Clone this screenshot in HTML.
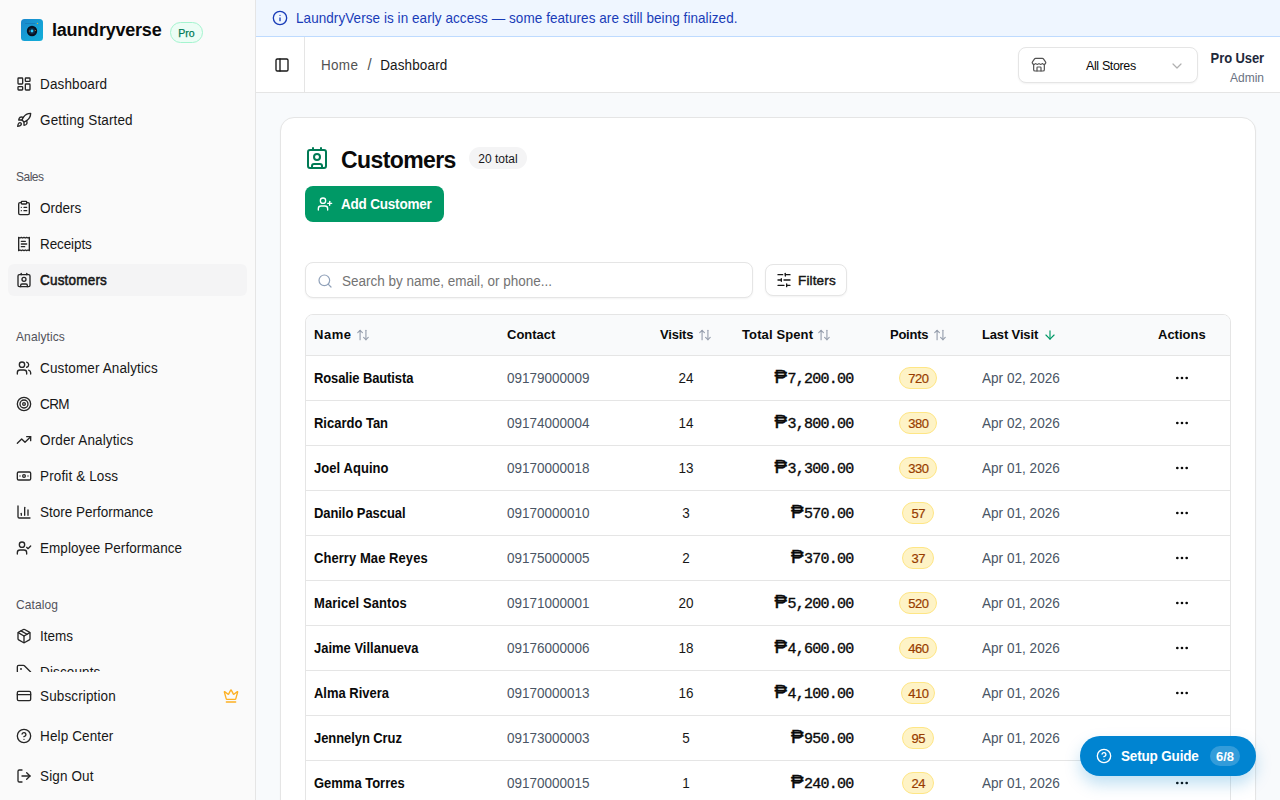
<!DOCTYPE html>
<html lang="en">
<head>
<meta charset="utf-8">
<title>Customers - LaundryVerse</title>
<style>
*{box-sizing:border-box;margin:0;padding:0}
html,body{width:1280px;height:800px;overflow:hidden}
body{font-family:"Liberation Sans",sans-serif;color:#0a0a0a;background:#f8fafc;position:relative;font-size:14px}
svg{display:block}
.abs{position:absolute}
.ico{position:absolute;width:16px;height:16px;fill:none;stroke:#262626;stroke-width:2;stroke-linecap:round;stroke-linejoin:round}
/* sidebar */
#sb{position:absolute;left:0;top:0;width:256px;height:800px;background:#fafafa;border-right:1px solid #e5e5e5;overflow:hidden}
.nav{position:absolute;left:8px;width:239px;height:32px;border-radius:6px}
.nav.act{background:#f4f4f5}
.nav .ico{left:8px;top:8px}
.nav span{position:absolute;left:32px;top:0;transform:translateY(.8px) scaleY(1.08);line-height:32px;font-size:13.5px;letter-spacing:.13px;color:#171717;white-space:nowrap}
.nav.act span{font-weight:normal;-webkit-text-stroke:.5px #171717;font-size:13.5px;letter-spacing:.2px}
.grp{position:absolute;left:16px;transform:translateY(-.2px) scaleY(1.03);transform-origin:0 50%;font-size:12px;letter-spacing:.1px;color:#52525b;line-height:16px}
/* banner */
#bn{position:absolute;left:256px;top:0;width:1024px;height:37px;background:#eff6ff;border-bottom:1px solid #bedbff}
#bn span{position:absolute;left:40px;top:1px;transform:translateY(-.3px) scaleY(1.06);line-height:36px;font-size:13.5px;letter-spacing:.065px;color:#193cb8;white-space:nowrap}
/* header */
#hd{position:absolute;left:256px;top:37px;width:1024px;height:56px;background:#fff;border-bottom:1px solid #e5e5e5}
/* card */
#card{position:absolute;left:280px;top:117px;width:976px;height:720px;background:#fff;border:1px solid #e5e5e5;border-radius:14px;box-shadow:0 1px 2px rgba(0,0,0,.04)}
/* table */
#tb{position:absolute;left:305px;top:314px;width:926px;height:520px;border:1px solid #e5e5e5;border-radius:8px 8px 0 0;overflow:hidden;background:#fff}
#th{position:absolute;left:0;top:0;width:100%;height:41px;background:#f9fafb;border-bottom:1px solid #e5e5e5}
.h{position:absolute;top:1px;transform:translateY(-.7px) scaleY(1.05);line-height:40px;font-weight:bold;font-size:13px;color:#0a0a0a;white-space:nowrap}
.srt{width:14px;height:14px;top:13px;stroke:#99a1af}
.row{position:absolute;left:0;width:100%;height:45px;border-bottom:1px solid #e5e5e5}
.row>*{position:absolute;top:0;line-height:44px;white-space:nowrap}
.nm{left:8px;transform:scaleX(.915);transform-origin:0 50%;font-weight:bold;font-size:14.2px;color:#0a0a0a}
.ct{left:201px;transform:scaleX(.93);transform-origin:0 50%;font-size:14.5px;color:#4a5565}
.vs{left:350px;transform:scaleX(.93);width:60px;text-align:center;font-size:14.5px;color:#171717}
.sp{right:376.500px;font-family:"Liberation Mono","DejaVu Sans Mono",monospace;font-weight:normal;-webkit-text-stroke:.35px #0a0a0a;font-size:15px;letter-spacing:-.75px;color:#0a0a0a;padding-top:2px}
.pt{left:562px;width:100px;text-align:center}
.pt i{display:inline-block;font-style:normal;height:22px;line-height:22px;padding:0 7.700px 0 8.300px;border-radius:11px;background:#fef3c6;border:1px solid #fee685;color:#973c00;font-size:13px;letter-spacing:-.55px;-webkit-text-stroke:.2px #973c00;vertical-align:middle;position:relative;top:-1px}
.lv{left:676px;transform:scaleX(.937);transform-origin:0 50%;font-size:14.5px;color:#4a5565}
.row>.ac{left:868px;top:14px;stroke:#0a0a0a;fill:#0a0a0a}
.ps{font-family:"Liberation Sans",sans-serif;font-size:18.7px;font-weight:normal;-webkit-text-stroke:.45px #0a0a0a;line-height:1;letter-spacing:0;margin-right:.5px}
</style>
</head>
<body>

<!-- SIDEBAR -->
<div id="sb">
  <div id="logo" class="abs" style="left:21px;top:19px;width:22px;height:22px;border-radius:3.5px;background:linear-gradient(135deg,#1a86cc,#15a2d6 60%,#12aed8);overflow:hidden">
    <svg width="22" height="22" viewBox="0 0 22 22"><rect x="4" y="3.900" width="10.500" height="1" rx=".5" fill="#1679b8" opacity=".8"/><circle cx="11" cy="12" r="5.200" fill="#08101f"/><circle cx="11" cy="12" r="3.200" fill="#0d2a45"/><circle cx="11" cy="12" r="1.400" fill="#2ccfff"/><circle cx="8.300" cy="12" r=".5" fill="#e0902a"/><circle cx="14.300" cy="11.500" r=".5" fill="#e0902a"/><circle cx="16.500" cy="4.400" r=".7" fill="#d8b23c"/></svg>
  </div>
  <div class="abs" style="left:52px;top:17px;line-height:26px;font-size:18px;font-weight:bold;color:#0a0a0a;letter-spacing:-.22px">laundryverse</div>
  <div class="abs" style="left:170px;top:22px;width:33px;height:21px;border-radius:11px;background:#ecfdf5;border:1px solid #a4f4cf;color:#007a55;font-size:10.5px;line-height:20px;-webkit-text-stroke:.25px #007a55;text-align:center">Pro</div>

  <div class="nav" style="top:68px"><svg class="ico" viewBox="0 0 24 24"><rect x="3" y="3" width="7" height="9" rx="1"/><rect x="14" y="3" width="7" height="5" rx="1"/><rect x="14" y="12" width="7" height="9" rx="1"/><rect x="3" y="16" width="7" height="5" rx="1"/></svg><span>Dashboard</span></div>
  <div class="nav" style="top:104px"><svg class="ico" viewBox="0 0 24 24"><path d="M4.5 16.5c-1.5 1.26-2 5-2 5s3.740-.5 5-2c.71-.84.7-2.130-.09-2.910a2.180 2.180 0 0 0-2.910-.09z"/><path d="m12 15-3-3a22 22 0 0 1 2-3.950A12.880 12.880 0 0 1 22 2c0 2.720-.78 7.500-6 11a22.350 22.350 0 0 1-4 2z"/><path d="M9 12H4s.55-3.030 2-4c1.620-1.080 5 0 5 0"/><path d="M12 15v5s3.030-.55 4-2c1.080-1.620 0-5 0-5"/></svg><span>Getting Started</span></div>

  <div class="grp" style="top:169px;letter-spacing:-.5px">Sales</div>
  <div class="nav" style="top:192px"><svg class="ico" viewBox="0 0 24 24"><rect x="8" y="2" width="8" height="4" rx="1" ry="1"/><path d="M16 4h2a2 2 0 0 1 2 2v14a2 2 0 0 1-2 2H6a2 2 0 0 1-2-2V6a2 2 0 0 1 2-2h2"/><path d="M12 11h4"/><path d="M12 16h4"/><path d="M8 11h.01"/><path d="M8 16h.01"/></svg><span style="letter-spacing:0">Orders</span></div>
  <div class="nav" style="top:228px"><svg class="ico" viewBox="0 0 24 24"><path d="M4 2v20l2-1 2 1 2-1 2 1 2-1 2 1 2-1 2 1V2l-2 1-2-1-2 1-2-1-2 1-2-1-2 1Z"/><path d="M14 8H8"/><path d="M16 12H8"/><path d="M13 16H8"/></svg><span style="letter-spacing:-.1px">Receipts</span></div>
  <div class="nav act" style="top:264px"><svg class="ico" viewBox="0 0 24 24"><path d="M16 2v2"/><path d="M7 22v-2a2 2 0 0 1 2-2h6a2 2 0 0 1 2 2v2"/><path d="M8 2v2"/><circle cx="12" cy="11" r="3"/><rect x="3" y="4" width="18" height="18" rx="2"/></svg><span>Customers</span></div>

  <div class="grp" style="top:329px">Analytics</div>
  <div class="nav" style="top:352px"><svg class="ico" viewBox="0 0 24 24"><path d="M16 21v-2a4 4 0 0 0-4-4H6a4 4 0 0 0-4 4v2"/><circle cx="9" cy="7" r="4"/><path d="M22 21v-2a4 4 0 0 0-3-3.870"/><path d="M16 3.130a4 4 0 0 1 0 7.750"/></svg><span>Customer Analytics</span></div>
  <div class="nav" style="top:388px"><svg class="ico" viewBox="0 0 24 24"><circle cx="12" cy="12" r="10"/><circle cx="12" cy="12" r="6"/><circle cx="12" cy="12" r="2"/></svg><span style="letter-spacing:-.6px">CRM</span></div>
  <div class="nav" style="top:424px"><svg class="ico" viewBox="0 0 24 24"><path d="M16 7h6v6"/><path d="m22 7-8.500 8.500-5-5L2 17"/></svg><span>Order Analytics</span></div>
  <div class="nav" style="top:460px"><svg class="ico" viewBox="0 0 24 24"><rect width="20" height="12" x="2" y="6" rx="2"/><circle cx="12" cy="12" r="2"/><path d="M6 12h.01M18 12h.01"/></svg><span>Profit &amp; Loss</span></div>
  <div class="nav" style="top:496px"><svg class="ico" viewBox="0 0 24 24"><path d="M3 3v16a2 2 0 0 0 2 2h16"/><path d="M18 17V9"/><path d="M13 17V5"/><path d="M8 17v-3"/></svg><span style="letter-spacing:0">Store Performance</span></div>
  <div class="nav" style="top:532px"><svg class="ico" viewBox="0 0 24 24"><path d="m16 11 2 2 4-4"/><path d="M16 21v-2a4 4 0 0 0-4-4H6a4 4 0 0 0-4 4v2"/><circle cx="9" cy="7" r="4"/></svg><span style="letter-spacing:.05px">Employee Performance</span></div>

  <div class="grp" style="top:597px">Catalog</div>
  <div class="nav" style="top:620px"><svg class="ico" viewBox="0 0 24 24"><path d="M11 21.730a2 2 0 0 0 2 0l7-4A2 2 0 0 0 21 16V8a2 2 0 0 0-1-1.730l-7-4a2 2 0 0 0-2 0l-7 4A2 2 0 0 0 3 8v8a2 2 0 0 0 1 1.730z"/><path d="M12 22V12"/><path d="M3.300 7 12 12l8.700-5"/><path d="m7.500 4.270 9 5.150"/></svg><span style="letter-spacing:0">Items</span></div>
  <div class="nav" style="top:656px"><svg class="ico" viewBox="0 0 24 24"><path d="M12.586 2.586A2 2 0 0 0 11.172 2H4a2 2 0 0 0-2 2v7.172a2 2 0 0 0 .586 1.414l8.704 8.704a2.426 2.426 0 0 0 3.420 0l6.580-6.580a2.426 2.426 0 0 0 0-3.420z"/><circle cx="7.500" cy="7.500" r=".5" fill="#262626"/></svg><span>Discounts</span></div>

  <!-- footer -->
  <div class="abs" style="left:0;top:672px;width:255px;height:128px;background:#fafafa">
    <div class="nav" style="top:8px"><svg class="ico" viewBox="0 0 24 24"><rect width="20" height="14" x="2" y="5" rx="2"/><path d="M2 10h20"/></svg><span>Subscription</span>
      <svg class="ico" style="left:215px;stroke:#fdb022" viewBox="0 0 24 24"><path d="M11.562 3.266a.5.5 0 0 1 .876 0L15.390 8.870a1 1 0 0 0 1.516.294L21.183 5.500a.5.500 0 0 1 .798.519l-2.834 10.246a1 1 0 0 1-.956.734H5.810a1 1 0 0 1-.957-.734L2.020 6.020a.5.500 0 0 1 .798-.519l4.276 3.664a1 1 0 0 0 1.516-.294z"/><path d="M5 21h14"/></svg></div>
    <div class="nav" style="top:48px"><svg class="ico" viewBox="0 0 24 24"><circle cx="12" cy="12" r="10"/><path d="M9.090 9a3 3 0 0 1 5.830 1c0 2-3 3-3 3"/><path d="M12 17h.01"/></svg><span>Help Center</span></div>
    <div class="nav" style="top:88px"><svg class="ico" viewBox="0 0 24 24"><path d="M9 21H5a2 2 0 0 1-2-2V5a2 2 0 0 1 2-2h4"/><path d="m16 17 5-5-5-5"/><path d="M21 12H9"/></svg><span>Sign Out</span></div>
  </div>
</div>

<!-- BANNER -->
<div id="bn">
  <svg class="ico" style="left:16px;top:10px;stroke:#193cb8" viewBox="0 0 24 24"><circle cx="12" cy="12" r="10"/><path d="M12 16v-4"/><path d="M12 8h.01"/></svg>
  <span>LaundryVerse is in early access — some features are still being finalized.</span>
</div>

<!-- HEADER -->
<div id="hd">
  <svg class="ico" style="left:18px;top:20px;stroke:#171717" viewBox="0 0 24 24"><rect width="18" height="18" x="3" y="3" rx="2"/><path d="M9 3v18"/></svg>
  <div class="abs" style="left:48px;top:0;width:1px;height:55px;background:#e5e5e5"></div>
  <div class="abs" style="left:65px;top:0;transform:translateY(-.5px) scaleY(1.07);line-height:55px;font-size:13.5px;color:#525252;white-space:nowrap"><span style="letter-spacing:.3px">Home</span><span style="margin:0 8.500px 0 9.300px;color:#525252;font-size:15px">/</span><span style="color:#171717;letter-spacing:.13px">Dashboard</span></div>
  <div class="abs" style="left:762px;top:10px;width:180px;height:36px;border:1px solid #e5e5e5;border-radius:8px;background:#fff;box-shadow:0 1px 2px rgba(0,0,0,.05)">
    <svg class="ico" style="left:12px;top:9px;stroke:#525252;stroke-width:1.8" viewBox="0 0 24 24"><path d="M15 21v-5a1 1 0 0 0-1-1h-4a1 1 0 0 0-1 1v5"/><path d="M17.774 10.310a1.120 1.120 0 0 0-1.549 0 2.500 2.500 0 0 1-3.451 0 1.120 1.120 0 0 0-1.548 0 2.500 2.500 0 0 1-3.452 0 1.120 1.120 0 0 0-1.549 0 2.500 2.500 0 0 1-3.770-3.248l2.889-4.184A2 2 0 0 1 7 2h10a2 2 0 0 1 1.653.873l2.895 4.192a2.500 2.500 0 0 1-3.774 3.244"/><path d="M4 10.950V19a2 2 0 0 0 2 2h12a2 2 0 0 0 2-2v-8.050"/></svg>
    <div class="abs" style="left:67px;top:1px;line-height:35px;font-size:12.5px;letter-spacing:-.37px;color:#0a0a0a;white-space:nowrap">All Stores</div>
    <svg class="ico" style="left:150px;top:10px;stroke:#b0b0b0;stroke-width:1.8" viewBox="0 0 24 24"><path d="m6 9 6 6 6-6"/></svg>
  </div>
  <div class="abs" style="right:16px;top:13px;transform:translateY(-.3px) scaleY(1.08);line-height:18px;font-size:13px;letter-spacing:-.1px;font-weight:bold;color:#1e293b;white-space:nowrap">Pro User</div>
  <div class="abs" style="right:16px;top:33px;line-height:16px;font-size:12px;color:#6a7282;white-space:nowrap">Admin</div>
</div>

<!-- CARD -->
<div id="card"></div>
<svg class="ico" style="left:305px;top:146px;width:24px;height:24px;stroke:#007a55" viewBox="0 0 24 24"><path d="M16 2v2"/><path d="M7 22v-2a2 2 0 0 1 2-2h6a2 2 0 0 1 2 2v2"/><path d="M8 2v2"/><circle cx="12" cy="11" r="3"/><rect x="3" y="4" width="18" height="18" rx="2"/></svg>
<div class="abs" id="ttl" style="left:341px;top:144px;line-height:32px;font-size:23px;letter-spacing:-.6px;font-weight:bold;color:#0a0a0a;white-space:nowrap">Customers</div>
<div class="abs" style="left:469px;top:147px;width:58px;height:22px;border-radius:11px;background:#f4f4f5;font-size:12px;line-height:24px;text-align:center;color:#18181b;white-space:nowrap">20 total</div>

<div class="abs" style="left:305px;top:186px;width:139px;height:36px;border-radius:8px;background:#009966">
  <svg class="ico" style="left:12px;top:10px;stroke:#fff" viewBox="0 0 24 24"><path d="M16 21v-2a4 4 0 0 0-4-4H6a4 4 0 0 0-4 4v2"/><circle cx="9" cy="7" r="4"/><path d="M19 8v6"/><path d="M22 11h-6"/></svg>
  <div class="abs" style="left:36px;top:0;transform:translateY(.4px) scaleY(1.1);line-height:36px;font-size:13.5px;letter-spacing:-.2px;font-weight:bold;color:#fff;white-space:nowrap">Add Customer</div>
</div>

<!-- search -->
<div class="abs" style="left:305px;top:262px;width:448px;height:36px;border:1px solid #e5e5e5;border-radius:8px;background:#fff;box-shadow:0 1px 2px rgba(0,0,0,.05)">
  <svg class="ico" style="left:11px;top:9.5px;stroke:#90a1b9;stroke-width:1.8" viewBox="0 0 24 24"><path d="m21 21-4.340-4.340"/><circle cx="11" cy="11" r="8"/></svg>
  <div class="abs" style="left:36px;top:0;transform:translateY(.6px) scaleY(1.05);line-height:36px;font-size:13.5px;color:#737373;white-space:nowrap">Search by name, email, or phone...</div>
</div>
<div class="abs" style="left:765px;top:264px;width:82px;height:32px;border:1px solid #e5e5e5;border-radius:8px;background:#fff;box-shadow:0 1px 2px rgba(0,0,0,.05)">
  <svg class="ico" style="left:10px;top:7px;stroke:#171717" viewBox="0 0 24 24"><path d="M21 4h-7"/><path d="M10 4H3"/><path d="M21 12h-9"/><path d="M8 12H3"/><path d="M21 20h-5"/><path d="M12 20H3"/><path d="M14 2v4"/><path d="M8 10v4"/><path d="M16 18v4"/></svg>
  <div class="abs" style="left:32px;top:0;line-height:32px;font-size:13.5px;letter-spacing:.15px;font-weight:normal;-webkit-text-stroke:.45px #171717;color:#171717;white-space:nowrap">Filters</div>
</div>

<!-- TABLE -->
<div id="tb">
  <div id="th">
    <div class="h" style="left:8px;letter-spacing:.55px">Name</div><svg class="ico srt" style="left:50px" viewBox="0 0 24 24"><path d="m21 16-4 4-4-4"/><path d="M17 20V4"/><path d="m3 8 4-4 4 4"/><path d="M7 4v16"/></svg>
    <div class="h" style="left:201px">Contact</div>
    <div class="h" style="left:354px;letter-spacing:-.2px">Visits</div><svg class="ico srt" style="left:392px" viewBox="0 0 24 24"><path d="m21 16-4 4-4-4"/><path d="M17 20V4"/><path d="m3 8 4-4 4 4"/><path d="M7 4v16"/></svg>
    <div class="h" style="left:436px;letter-spacing:.12px">Total Spent</div><svg class="ico srt" style="left:511px" viewBox="0 0 24 24"><path d="m21 16-4 4-4-4"/><path d="M17 20V4"/><path d="m3 8 4-4 4 4"/><path d="M7 4v16"/></svg>
    <div class="h" style="left:584px;letter-spacing:-.25px">Points</div><svg class="ico srt" style="left:627px" viewBox="0 0 24 24"><path d="m21 16-4 4-4-4"/><path d="M17 20V4"/><path d="m3 8 4-4 4 4"/><path d="M7 4v16"/></svg>
    <div class="h" style="left:676px;letter-spacing:-.15px">Last Visit</div><svg class="ico srt" style="left:737px;stroke:#009966" viewBox="0 0 24 24"><path d="M12 5v14"/><path d="m19 12-7 7-7-7"/></svg>
    <div class="h" style="left:852px">Actions</div>
  </div>
<!--ROWS-->
  <div class="row" style="top:41px"><div class="nm" style="letter-spacing:-.12px">Rosalie Bautista</div><div class="ct">09179000009</div><div class="vs">24</div><div class="sp"><span class="ps">₱</span>7,200.00</div><div class="pt"><i>720</i></div><div class="lv">Apr 02, 2026</div><svg class="ico ac" viewBox="0 0 24 24"><circle cx="12" cy="12" r="1"/><circle cx="19" cy="12" r="1"/><circle cx="5" cy="12" r="1"/></svg></div>
  <div class="row" style="top:86px"><div class="nm">Ricardo Tan</div><div class="ct">09174000004</div><div class="vs">14</div><div class="sp"><span class="ps">₱</span>3,800.00</div><div class="pt"><i>380</i></div><div class="lv">Apr 02, 2026</div><svg class="ico ac" viewBox="0 0 24 24"><circle cx="12" cy="12" r="1"/><circle cx="19" cy="12" r="1"/><circle cx="5" cy="12" r="1"/></svg></div>
  <div class="row" style="top:131px"><div class="nm" style="letter-spacing:.08px">Joel Aquino</div><div class="ct">09170000018</div><div class="vs">13</div><div class="sp"><span class="ps">₱</span>3,300.00</div><div class="pt"><i>330</i></div><div class="lv">Apr 01, 2026</div><svg class="ico ac" viewBox="0 0 24 24"><circle cx="12" cy="12" r="1"/><circle cx="19" cy="12" r="1"/><circle cx="5" cy="12" r="1"/></svg></div>
  <div class="row" style="top:176px"><div class="nm" style="letter-spacing:-.07px">Danilo Pascual</div><div class="ct">09170000010</div><div class="vs">3</div><div class="sp"><span class="ps">₱</span>570.00</div><div class="pt"><i>57</i></div><div class="lv">Apr 01, 2026</div><svg class="ico ac" viewBox="0 0 24 24"><circle cx="12" cy="12" r="1"/><circle cx="19" cy="12" r="1"/><circle cx="5" cy="12" r="1"/></svg></div>
  <div class="row" style="top:221px"><div class="nm" style="letter-spacing:.08px">Cherry Mae Reyes</div><div class="ct">09175000005</div><div class="vs">2</div><div class="sp"><span class="ps">₱</span>370.00</div><div class="pt"><i>37</i></div><div class="lv">Apr 01, 2026</div><svg class="ico ac" viewBox="0 0 24 24"><circle cx="12" cy="12" r="1"/><circle cx="19" cy="12" r="1"/><circle cx="5" cy="12" r="1"/></svg></div>
  <div class="row" style="top:266px"><div class="nm" style="letter-spacing:.085px">Maricel Santos</div><div class="ct">09171000001</div><div class="vs">20</div><div class="sp"><span class="ps">₱</span>5,200.00</div><div class="pt"><i>520</i></div><div class="lv">Apr 01, 2026</div><svg class="ico ac" viewBox="0 0 24 24"><circle cx="12" cy="12" r="1"/><circle cx="19" cy="12" r="1"/><circle cx="5" cy="12" r="1"/></svg></div>
  <div class="row" style="top:311px"><div class="nm">Jaime Villanueva</div><div class="ct">09176000006</div><div class="vs">18</div><div class="sp"><span class="ps">₱</span>4,600.00</div><div class="pt"><i>460</i></div><div class="lv">Apr 01, 2026</div><svg class="ico ac" viewBox="0 0 24 24"><circle cx="12" cy="12" r="1"/><circle cx="19" cy="12" r="1"/><circle cx="5" cy="12" r="1"/></svg></div>
  <div class="row" style="top:356px"><div class="nm">Alma Rivera</div><div class="ct">09170000013</div><div class="vs">16</div><div class="sp"><span class="ps">₱</span>4,100.00</div><div class="pt"><i style="padding:0 6px 0 6.600px">410</i></div><div class="lv">Apr 01, 2026</div><svg class="ico ac" viewBox="0 0 24 24"><circle cx="12" cy="12" r="1"/><circle cx="19" cy="12" r="1"/><circle cx="5" cy="12" r="1"/></svg></div>
  <div class="row" style="top:401px"><div class="nm" style="letter-spacing:-.07px">Jennelyn Cruz</div><div class="ct">09173000003</div><div class="vs">5</div><div class="sp"><span class="ps">₱</span>950.00</div><div class="pt"><i>95</i></div><div class="lv">Apr 01, 2026</div><svg class="ico ac" viewBox="0 0 24 24"><circle cx="12" cy="12" r="1"/><circle cx="19" cy="12" r="1"/><circle cx="5" cy="12" r="1"/></svg></div>
  <div class="row" style="top:446px"><div class="nm">Gemma Torres</div><div class="ct">09170000015</div><div class="vs">1</div><div class="sp"><span class="ps">₱</span>240.00</div><div class="pt"><i>24</i></div><div class="lv">Apr 01, 2026</div><svg class="ico ac" viewBox="0 0 24 24"><circle cx="12" cy="12" r="1"/><circle cx="19" cy="12" r="1"/><circle cx="5" cy="12" r="1"/></svg></div>
<!--/ROWS-->
</div>

<!-- floating -->
<div class="abs" style="left:1080px;top:736px;width:176px;height:40px;border-radius:20px;background:#0084d1;box-shadow:0 8px 16px rgba(0,132,209,.25)">
  <svg class="ico" style="left:16px;top:12px;stroke:#fff" viewBox="0 0 24 24"><circle cx="12" cy="12" r="10"/><path d="M9.090 9a3 3 0 0 1 5.830 1c0 2-3 3-3 3"/><path d="M12 17h.01"/></svg>
  <div class="abs" style="left:41px;top:0;transform:translateY(.4px) scaleY(1.08);line-height:40px;font-size:13.5px;letter-spacing:-.17px;font-weight:bold;color:#fff;white-space:nowrap">Setup Guide</div>
  <div class="abs" style="left:130px;top:10px;width:30px;height:20px;border-radius:10px;background:rgba(255,255,255,.2);font-size:13px;font-weight:bold;line-height:21px;text-align:center;color:#fff">6/8</div>
</div>

</body>
</html>
